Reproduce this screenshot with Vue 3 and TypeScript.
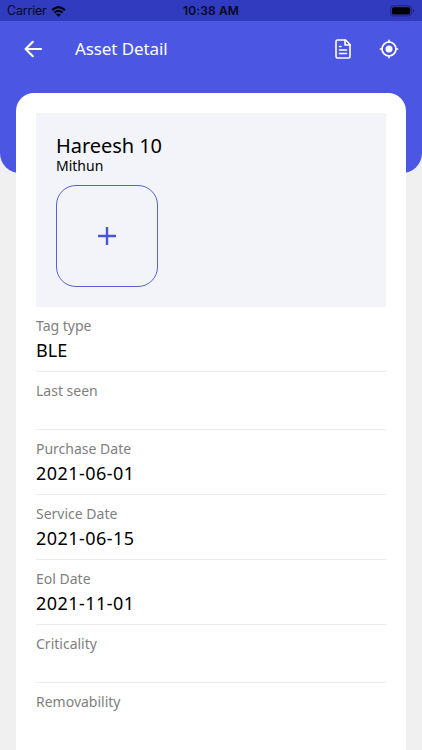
<script setup lang="ts">
interface Field {
  label: string
  value: string
}

const fields: Field[] = [
  { label: 'Tag type', value: 'BLE' },
  { label: 'Last seen', value: '' },
  { label: 'Purchase Date', value: '2021-06-01' },
  { label: 'Service Date', value: '2021-06-15' },
  { label: 'Eol Date', value: '2021-11-01' },
  { label: 'Criticality', value: '' },
  { label: 'Removability', value: '' },
]

const isDate = (value: string): boolean => /^\d{4}-\d{2}-\d{2}$/.test(value)
</script>

<template>
  <div class="screen">
    <div class="backdrop"></div>
    <div class="status">
      <div class="carrier">
        <span>Carrier</span>
        <svg class="wifi" viewBox="0 0 16 12" fill="none" stroke="#04040f" stroke-width="2.4">
          <path d="M1 4.5Q8 -2 15 4.5" />
          <path d="M3.6 7.4Q8 3.4 12.4 7.400" />
          <path d="M8 11.8L5.200 9.200Q8 7 10.800 9.200Z" fill="#04040f" stroke="none" />
        </svg>
      </div>
      <span class="time">10:38 AM</span>
      <svg class="battery" viewBox="0 0 26 12">
        <rect x="0.5" y="0.5" width="22" height="10.6" rx="3" fill="none" stroke="#1c237e" />
        <rect x="2" y="2" width="19" height="7.6" rx="1.6" fill="#000" />
        <path d="M24 4v3.6q1.3-.5 1.3-1.8T24 4z" fill="#1c237e" />
      </svg>
    </div>
    <header class="bar">
      <button class="icon back" aria-label="Back">
        <svg width="18" height="18" viewBox="0 0 18 18" fill="none" stroke="#fff" stroke-width="2.1" stroke-linecap="round" stroke-linejoin="round">
          <path d="M17 9H1.8M8.800 1.800L1.600 9l7.200 7.200" />
        </svg>
      </button>
      <h1 class="heading">Asset Detail</h1>
      <button class="icon doc" aria-label="Report">
        <svg width="16" height="20" viewBox="0 0 16 20" fill="none" stroke="#fff" stroke-width="1.6" stroke-linecap="round" stroke-linejoin="round">
          <path d="M2.500 1H10.500l4.500 4.500v12a1.500 1.500 0 0 1-1.500 1.500h-11A1.500 1.500 0 0 1 1 17.500v-15A1.500 1.500 0 0 1 2.500 1z" />
          <path d="M10 1v5h5M4.500 7.500H6M4.500 11h7M4.500 14.500h7" />
        </svg>
      </button>
      <button class="icon locate" aria-label="Locate">
        <svg width="20" height="20" viewBox="0 0 20 20" fill="none" stroke="#fff" stroke-width="1.7" stroke-linecap="round">
          <circle cx="10" cy="10" r="7" />
          <circle cx="10" cy="10" r="3.500" fill="#fff" stroke="none" />
          <path d="M10 1.400v1.600M10 17v1.600M1.400 10h1.600M17 10h1.600" />
        </svg>
      </button>
    </header>
    <main class="card">
      <section class="summary">
        <h2 class="name">Hareesh 10</h2>
        <p class="owner">Mithun</p>
        <button class="add" aria-label="Add photo">
          <svg width="18" height="18" viewBox="0 0 18 18" stroke="#4a54d6" stroke-width="2.4">
            <path d="M0 9h18M9 0v18" />
          </svg>
        </button>
      </section>
      <dl class="fields">
        <div v-for="field in fields" :key="field.label" class="field" :class="{ empty: !field.value }">
          <dt>{{ field.label }}</dt>
          <dd v-if="field.value" :class="{ date: isDate(field.value) }">{{ field.value }}</dd>
        </div>
      </dl>
    </main>
  </div>
</template>

<style>
body {
  background: #f0f0f0;
}
</style>

<style scoped>
* {
  box-sizing: border-box;
  margin: 0;
  padding: 0;
}
.screen {
  position: relative;
  height: 750px;
  overflow: hidden;
  display: flex;
  flex-direction: column;
  background: #f0f0f0;
  font-family: 'Noto Sans', sans-serif;
  color: #000;
}
.backdrop {
  position: absolute;
  inset: 0 0 auto;
  height: 173px;
  border-radius: 0 0 20px 20px;
  background: #4b56e3;
}
.status {
  position: relative;
  height: 21px;
  flex: none;
  display: grid;
  grid-template-columns: 1fr auto 1fr;
  align-items: center;
  padding: 1px 7px 0 7px;
  background: #303bc0;
  font: 12.5px/20px Inter, sans-serif;
  color: #070920;
}
.carrier {
  display: flex;
  align-items: center;
  gap: 4px;
  letter-spacing: -0.2px;
}
.wifi {
  width: 15px;
  height: 11px;
}
.time {
  font-weight: 600;
  font-size: 12px;
  letter-spacing: 0.15px;
}
.battery {
  width: 25px;
  height: 12px;
  justify-self: end;
}
.bar {
  position: relative;
  height: 72px;
  flex: none;
  display: flex;
  align-items: center;
  padding: 0 23.5px 16px 24px;
}
.icon {
  display: flex;
  border: 0;
  background: none;
}
.heading {
  margin: 0 auto 0 33px;
  font-size: 17px;
  line-height: 24px;
  font-weight: 400;
  letter-spacing: -0.1px;
  color: #fff;
}
.locate {
  margin-left: 28px;
}
.card {
  position: relative;
  flex: 1;
  margin: 0 16px;
  padding: 20px 20px 0;
  border-radius: 18px 18px 0 0;
  background: #fff;
}
.summary {
  height: 194px;
  padding: 21px 20px 0;
  background: #f3f4fa;
}
.name {
  font-size: 20px;
  line-height: 24px;
  font-weight: 400;
  letter-spacing: -0.05px;
}
.owner {
  font-size: 14px;
  line-height: 16px;
}
.add {
  display: flex;
  align-items: center;
  justify-content: center;
  width: 102px;
  height: 102px;
  margin-top: 11px;
  border: 1px solid #5962d2;
  border-radius: 20px;
  background: none;
}
.field {
  height: 65.1px;
  padding-top: 9px;
  border-bottom: 1px solid #ececec;
}
.field.empty {
  height: 57.9px;
}
.field:last-child {
  border-bottom: 0;
}
dt {
  font-size: 14px;
  line-height: 20px;
  color: #808080;
}
dd {
  margin-top: 2px;
  font-size: 18px;
  line-height: 25px;
}
dd.date {
  letter-spacing: 0.45px;
}
</style>
